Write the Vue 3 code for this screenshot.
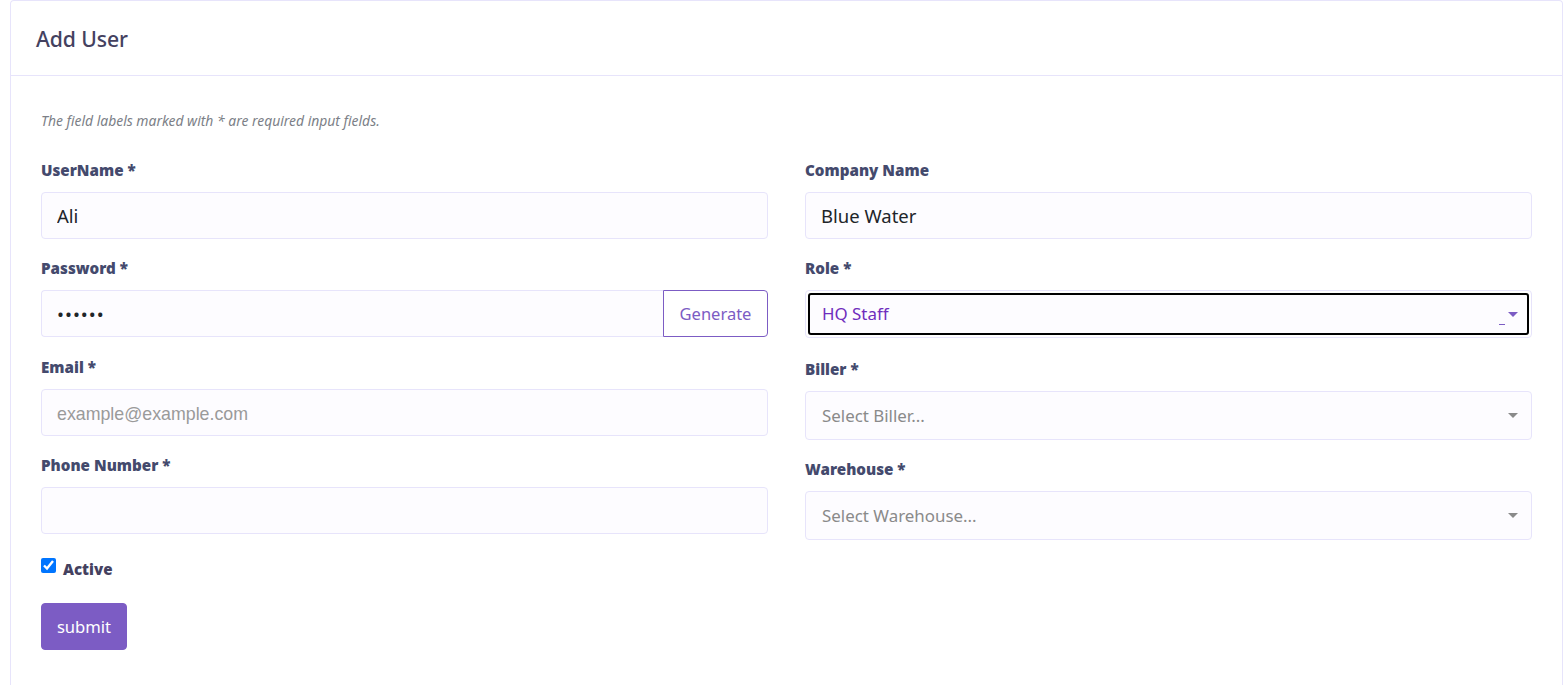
<script setup>
const hint = 'The field labels marked with * are required input fields.'
</script>

<template>
  <div class="card">
    <div class="card-header"><h4>Add User</h4></div>
    <div class="card-body">
      <p class="hint"><em>{{ hint }}</em></p>
      <form class="columns" @submit.prevent>
        <div class="col">
          <div class="field">
            <label>UserName *</label>
            <input class="control" type="text" value="Ali" />
          </div>
          <div class="field pass">
            <label>Password *</label>
            <div class="input-group">
              <input class="control secret" type="password" value="123456" />
              <button class="generate" type="button">Generate</button>
            </div>
          </div>
          <div class="field">
            <label>Email *</label>
            <input class="control email" type="email" placeholder="example@example.com" />
          </div>
          <div class="field">
            <label>Phone Number *</label>
            <input class="control" type="text" />
          </div>
          <div class="check">
            <input id="active" type="checkbox" checked />
            <label for="active">Active</label>
          </div>
          <button class="submit" type="submit">submit</button>
        </div>

        <div class="col">
          <div class="field">
            <label>Company Name</label>
            <input class="control" type="text" value="Blue Water" />
          </div>
          <div class="field role">
            <label>Role *</label>
            <div class="select-wrap">
              <button class="select focused" type="button">
                <span>HQ Staff</span>
                <i class="dash"></i>
                <i class="caret"></i>
              </button>
            </div>
          </div>
          <div class="field tall">
            <label>Biller *</label>
            <button class="select" type="button">
              <span>Select Biller...</span>
              <i class="caret"></i>
            </button>
          </div>
          <div class="field tall">
            <label>Warehouse *</label>
            <button class="select" type="button">
              <span>Select Warehouse...</span>
              <i class="caret"></i>
            </button>
          </div>
        </div>
      </form>
    </div>
  </div>
</template>

<style>
html, body { background: #fff; height: 100%; overflow: hidden; }
</style>

<style scoped>
.card {
  margin: 0 1px 0 10px;
  height: 685px;
  box-sizing: border-box;
  border: 1px solid #e7e4fb;
  border-bottom: 0;
  border-radius: 4px 4px 0 0;
  font-family: "Noto Sans", "Open Sans", sans-serif;
  color: #44415f;
}
.card-header {
  height: 75px;
  box-sizing: border-box;
  padding-left: 25px;
  display: flex;
  align-items: center;
  border-bottom: 1px solid #e7e4fb;
}
h4 { margin: 0; font-size: 21.2px; font-weight: 500; letter-spacing: -0.1px; }
.card-body { padding: 0 30px; }
.hint { margin: 36px 0 0; height: 18px; line-height: 18px; font-size: 13.9px; color: #7c7f87; }
.columns { display: grid; grid-template-columns: 727px 727px; column-gap: 37px; margin-top: 31px; }
.col { display: flex; flex-direction: column; }
.field { height: 98px; display: flex; flex-direction: column; }
.field.pass { height: 99px; }
.field.role { height: 101px; }
.field.tall { height: 100px; }
label {
  height: 22px;
  line-height: 19px;
  font-size: 15.2px;
  font-weight: 900;
  color: #444a6d;
  font-family: "Noto Sans", sans-serif;
}
.field label { margin-bottom: 10px; height: 21px; }
.control {
  width: 100%;
  height: 47px;
  box-sizing: border-box;
  padding: 0 15px;
  border: 1px solid #e7e4fb;
  border-radius: 4px;
  background: #fdfcff;
  font-family: inherit;
  font-size: 18.5px;
  color: #212529;
  outline: none;
}
.control::placeholder { color: #9a9a9a; }
.secret { letter-spacing: 1px; }
.email { font-family: "Liberation Sans", sans-serif; font-size: 17.8px; padding-top: 4px; }
.input-group { display: flex; }
.input-group .control { flex: 1; min-width: 0; border-right: 0; border-radius: 4px 0 0 4px; }
.generate {
  width: 105px;
  height: 47px;
  padding: 0;
  border: 1px solid #7c5cc4;
  border-radius: 0 4px 4px 0;
  background: #fff;
  color: #7c5cc4;
  font-family: inherit;
  font-size: 16.5px;
}
.check { display: flex; align-items: flex-start; height: 48px; margin-top: 1px; }
.check input { width: 15px; height: 15px; margin: 0 7px 0 0; accent-color: #0075ff; position: relative; top: 3px; }
.check label { font-size: 15.1px; line-height: 28px; height: 28px; margin: 0; color: #44415f; }
.submit {
  align-self: flex-start;
  width: 86px;
  height: 47px;
  padding: 0;
  border: 1px solid #7c5cc4;
  border-radius: 4px;
  background: #7c5cc4;
  color: #fff;
  font-family: inherit;
  font-size: 16.6px;
}
.select {
  width: 100%;
  height: 49px;
  box-sizing: border-box;
  padding: 0 13px 0 16px;
  display: flex;
  align-items: center;
  border: 1px solid #e7e4fb;
  border-radius: 4px;
  background: #fdfcff;
  color: #8a8a8a;
  font-family: inherit;
  font-size: 16.9px;
  text-align: left;
}
.select span { flex: 1; }
.caret {
  width: 0;
  height: 0;
  margin-left: 3px;
  border-left: 5px solid transparent;
  border-right: 5px solid transparent;
  border-top: 5px solid #8a8a8a;
}
.select-wrap {
  height: 48px;
  box-sizing: border-box;
  border: 1px solid #e7e4fb;
  border-radius: 4px;
  padding: 2px;
}
.select.focused {
  height: 42px;
  padding: 0 9px 0 12px;
  border: 2px solid #000;
  border-radius: 3px;
  color: #6f2dbd;
}
.select.focused span { position: relative; top: -1px; }
.select.focused .caret { border-top-color: #7c5cc4; }
.dash { width: 6px; height: 1px; background: #7c5cc4; margin-top: 20px; align-self: center; }
</style>
